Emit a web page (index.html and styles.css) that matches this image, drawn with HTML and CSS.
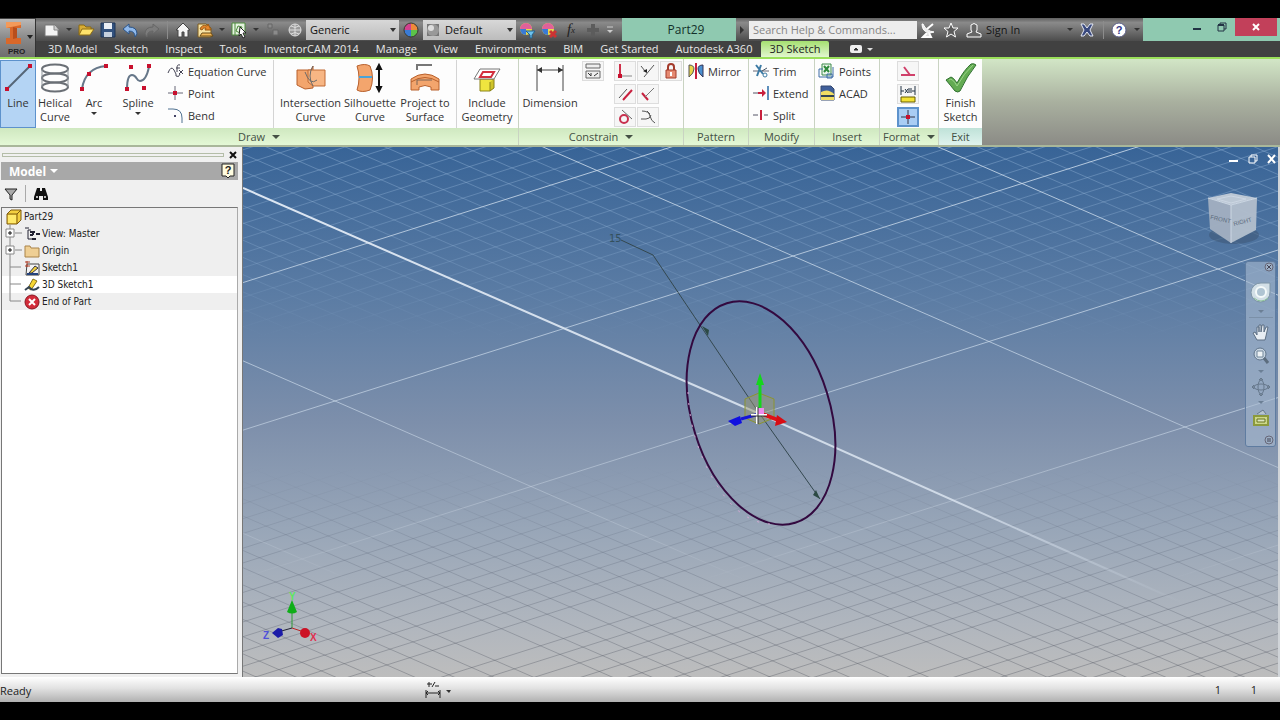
FILE: index.html
```html
<!DOCTYPE html>
<html lang="en">
<head>
<meta charset="utf-8">
<title>Part29</title>
<link rel="stylesheet" href="styles.css">
</head>
<body>
<div class="app">
<header class="top">
  <button class="app-button" aria-label="Application menu">
    <svg width="36" height="38" viewBox="0 0 36 38"><path d="M6 3h15v6h-4v10h4v6H6v-6h4V9H6z" fill="#d9682a"/><path d="M6 3h15v3l-15 3z" fill="#f39a5a"/><path d="M13 8l4 1v10l-4 1z" fill="#b94e1b"/><path d="M27 16h6l-3 4z" fill="#222"/><text x="8" y="35" class="pro">PRO</text></svg>
  </button>
  <div class="top-rows">
    <div class="titlebar">
      <div class="qat">
        <button class="slot" aria-label="New"><svg width="18" height="18"><path d="M2 4h10l3 4v7H2z" fill="#f4f4f4" stroke="#777"/><path d="M11 4v5h5" fill="#ccc" stroke="#888"/></svg></button>
        <button class="drop" aria-label="New options"></button>
        <button class="slot" aria-label="Open"><svg width="18" height="18"><path d="M2 14V4h5l2 2h5v3" fill="#d8ad35" stroke="#8b6b15"/><path d="M2 14l3-6h12l-4 6z" fill="#ffe36b" stroke="#8b6b15"/></svg></button>
        <button class="slot" aria-label="Save"><svg width="18" height="18"><path d="M2 2h14v14H2z" fill="#33527e" stroke="#1f3556"/><path d="M5 2h8v6H5z" fill="#e9eef5"/><path d="M5 11h8v5H5z" fill="#c5d0de"/></svg></button>
        <button class="slot" aria-label="Undo"><svg width="18" height="18"><path d="M2 8l6-5v3q8 0 8 7l-2 3q0-6-6-6v3z" fill="#8fb8ea" stroke="#2b5488"/></svg></button>
        <button class="slot" aria-label="Redo"><svg width="18" height="18"><path d="M16 8l-6-5v3q-8 0-8 7l2 3q0-6 6-6v3z" fill="#7c7c7c" stroke="#666"/></svg></button>
        <span class="sep"></span>
        <button class="slot" aria-label="Home"><svg width="18" height="18"><path d="M2 9l7-7 7 7h-2v7h-4v-5H8v5H4V9z" fill="#f5f5f5" stroke="#444"/></svg></button>
        <button class="slot" aria-label="Update"><svg width="18" height="18"><path d="M2 3h8l5 4v9H2z" fill="#f6e2a2" stroke="#7a5a20"/><path d="M4 8q2-5 7-3l1-2 3 6-6 0 1-2q-3-1-4 2z" fill="#e8862a" stroke="#9a5a15"/><path d="M6 12h9l2 3H4z" fill="#f2b95a" stroke="#6b4a15"/></svg></button>
        <button class="drop" aria-label="Update options"></button>
        <button class="slot" aria-label="Select"><svg width="18" height="18"><path d="M2 2h13v12H2z" fill="#e4f2df" stroke="#4d8a3c"/><path d="M5 2v12M8 5l4 1-2 6-4-2z" fill="none" stroke="#4d8a3c"/><path d="M10 6l6 6h-3l2 4-2 1-2-4-2 2z" fill="#fff" stroke="#222"/></svg></button>
        <button class="drop" aria-label="Select options"></button>
        <button class="slot" aria-label="Design doctor"><svg width="18" height="18"><path d="M4 3h4v4H4zM9 9h5v5H9z" fill="#8b8b8b" stroke="#666"/></svg></button>
        <button class="slot" aria-label="Material"><svg width="18" height="18"><circle cx="9" cy="9" r="6" fill="#999" stroke="#ddd"/><path d="M3 9h12M9 3v12M5 5q4 3 8 0M5 13q4-3 8 0" stroke="#ddd" fill="none"/></svg></button>
        <label class="combo"><select aria-label="Material"><option>Generic</option></select></label>
        <button class="slot ball" aria-label="Appearance"><svg width="18" height="18"><circle cx="9" cy="9" r="7" fill="#e9d94b"/><path d="M9 9L2 9a7 7 0 0 1 7-7z" fill="#d3408f"/><path d="M9 9V2a7 7 0 0 1 7 7z" fill="#ef8a3a"/><path d="M9 9H2a7 7 0 0 0 7 7z" fill="#3a7bd5"/><path d="M9 9v7a7 7 0 0 0 7-7z" fill="#5cc34a"/><circle cx="9" cy="9" r="7" fill="none" stroke="#333"/></svg></button>
        <label class="combo"><svg width="16" height="16"><path d="M2 2h12v12H2z" fill="#777"/><circle cx="8" cy="8" r="6" fill="#999"/><circle cx="6" cy="6" r="3" fill="#ddd"/></svg><select aria-label="Appearance"><option>Default</option></select></label>
        <button class="slot" aria-label="Adjust"><svg width="18" height="18"><circle cx="8" cy="8" r="6" fill="#e9d94b"/><path d="M8 8H2a6 6 0 0 1 12 0z" fill="#e0609a"/><path d="M8 8H2a6 6 0 0 0 6 6z" fill="#3a7bd5"/><path d="M8 10h9l-3 4v3h-2v-3z" fill="#6fc3ee" stroke="#23618a"/></svg></button>
        <button class="slot" aria-label="Clear"><svg width="18" height="18"><circle cx="8" cy="8" r="6" fill="#e9d94b"/><path d="M8 8H2a6 6 0 0 1 12 0z" fill="#e0609a"/><path d="M8 8H2a6 6 0 0 0 6 6z" fill="#3a7bd5"/><path d="M10 10l6 6m0-6l-6 6" stroke="#c33" stroke-width="3"/></svg></button>
        <button class="slot fx" aria-label="Parameters">f<sub>x</sub></button>
        <button class="slot" aria-label="Add"><svg width="18" height="18"><path d="M9 3v12M3 9h12" stroke="#5c5c5c" stroke-width="4"/></svg></button>
        <button class="drop" aria-label="Customize"><svg width="8" height="8"><path d="M1 1h6" stroke="#ccc"/><path d="M1 4h6L4 7z" fill="#ccc"/></svg></button>
      </div>
      <h1 class="doc-title">Part29</h1>
      <div class="info">
        <button class="drop side" aria-label="Expand"></button>
        <input class="search" type="text" placeholder="Search Help &amp; Commands..." aria-label="Search Help">
        <button class="slot" aria-label="Communication"><svg width="18" height="18"><path d="M3 3q0 8 8 9l4-1q-8-1-11-8z" fill="#eee" stroke="#fff"/><path d="M8 8l6-5M8 12l-4 4h8l-2-4" fill="#ddd" stroke="#fff" stroke-width="2"/></svg></button>
        <button class="slot" aria-label="Favorites"><svg width="18" height="18"><path d="M9 2l2 5h5l-4 3.500 1.500 5.500L9 13l-4.500 3L6 10.500 2 7h5z" fill="#5b5b5b" stroke="#fff"/></svg></button>
        <button class="slot" aria-label="Account"><svg width="18" height="18"><path d="M6 4q3-3 6 0v5l-1 2 5 2v3H2v-3l5-2-1-2z" fill="#666" stroke="#fff"/></svg></button>
        <button class="signin">Sign In</button>
        <button class="drop" aria-label="Account options"></button>
        <button class="slot" aria-label="Exchange"><svg width="18" height="18"><path d="M3 3h3l3 4 3-4h3l-3 6 3 6h-3l-3-4-3 4H3l3-6z" fill="#39497e" stroke="#e4e8f4"/></svg></button>
        <span class="sep"></span>
        <button class="slot" aria-label="Help"><svg width="18" height="18"><circle cx="9" cy="9" r="7" fill="#fff" stroke="#5a5d86"/><text x="9" y="13" class="qmark">?</text></svg></button>
        <button class="drop" aria-label="Help options"></button>
      </div>
      <div class="win">
        <button aria-label="Minimize"><svg width="12" height="12"><path d="M2 8h8" stroke="#234" stroke-width="2"/></svg></button>
        <button aria-label="Restore"><svg width="12" height="12"><path d="M2 4h6v6H2zM4 4V2h6v6H8" fill="none" stroke="#234"/><path d="M2 4h6" stroke="#234" stroke-width="2"/></svg></button>
        <button class="close" aria-label="Close"><svg width="12" height="12"><path d="M3 3l6 6M9 3l-6 6" stroke="#fff" stroke-width="2"/></svg></button>
      </div>
    </div>
    <nav class="tabs">
      <button>3D Model</button><button>Sketch</button><button>Inspect</button><button>Tools</button><button>InventorCAM 2014</button><button>Manage</button><button>View</button><button>Environments</button><button>BIM</button><button>Get Started</button><button>Autodesk A360</button><button class="active">3D Sketch</button>
      <button class="mini" aria-label="Ribbon display"><svg width="26" height="8"><rect x="0" y="0" width="12" height="8" rx="2" fill="#eee"/><path d="M4 5l2-2 2 2z" fill="#333" stroke="#333"/><path d="M17 3h6l-3 3z" fill="#ddd"/></svg></button>
    </nav>
  </div>
</header>

<section class="ribbon">
  <div class="panel draw">
    <div class="body">
      <button class="big on w36"><svg width="32" height="32"><path d="M5 27L28 4" stroke="#567" stroke-width="2"/><path d="M3 25h4v4H3zM26 2h4v4h-4z" fill="#c8102e"/></svg><span>Line</span></button>
      <button class="big w38"><svg width="32" height="32"><g fill="none" stroke="#6a6f75" stroke-width="2"><ellipse cx="16" cy="7" rx="13" ry="4.500"/><ellipse cx="16" cy="16" rx="13" ry="4.500"/><ellipse cx="16" cy="25" rx="13" ry="4.500"/></g><path d="M3 7v18M29 7v18" stroke="#8d949a" fill="none"/></svg><span>Helical Curve</span></button>
      <button class="big w40"><svg width="32" height="32"><path d="M4 27Q7 6 28 4" fill="none" stroke="#667789" stroke-width="2"/><path d="M2 25h4v4H2zM9 10h4v4H9zM26 2h4v4h-4z" fill="#c8102e"/></svg><span>Arc</span><i class="caret"></i></button>
      <button class="big w48"><svg width="32" height="32"><path d="M5 27Q5 13 10 13C15 13 14 19 18 19Q24 19 27 5" fill="none" stroke="#667789" stroke-width="2"/><path d="M3 25h4v4H3zM7 3h4v4H7zM25 2h4v4h-4zM20 24h4v4h-4z" fill="#c8102e"/></svg><span>Spline</span><i class="caret"></i></button>
      <div class="list pad">
        <button><svg width="18" height="18"><path d="M1 11q3-8 6-3t2 6q3 2 4-2" fill="none" stroke="#445" /><path d="M13 3q-3-1-3 3v4M9 6h4M12 8l4 4m0-4l-4 4" fill="none" stroke="#445"/></svg>Equation Curve</button>
        <button><svg width="18" height="18"><path d="M8 2v14M1 9h15" stroke="#667"/><path d="M6 7h4v4H6z" fill="#c8102e"/></svg>Point</button>
        <button><svg width="18" height="18"><path d="M1 3h5q9 0 9 9v5" fill="none" stroke="#4f7190" stroke-width="1"/><path d="M7 9h2v2H7z" fill="#446"/></svg>Bend</button>
      </div>
      <div class="group">
        <button class="big w61"><svg width="32" height="32"><path d="M2 8h14l2-4v22l-8 1-8-4z" fill="#f3a56d" stroke="#b8602c"/><path d="M13 8h17v16H18l-5-4z" fill="#f7b684" stroke="#c06a35"/><path d="M10 10q5 14 12 8M18 4q-6 10 0 20" fill="none" stroke="#6b6b6b"/></svg><span>Intersection Curve</span></button>
        <button class="big w58"><svg width="32" height="32"><path d="M3 4q8-3 13 0 5 12 0 24-8 3-13 0 4-12 0-24z" fill="#f3a56d" stroke="#b8602c"/><path d="M5 15h13" stroke="#4aa3d8" stroke-width="2"/><path d="M25 4v24M23 7l2-4 2 4zM23 25l2 4 2-4z" stroke="#111" stroke-width="2" fill="#111"/></svg><span>Silhouette Curve</span></button>
        <button class="big w52"><svg width="32" height="32"><path d="M8 8V3h15" fill="none" stroke="#777" stroke-width="2"/><path d="M2 17q14-10 28 0v11H22v-3q-6-3-12 0v3H2z" fill="#f3a56d" stroke="#b8602c"/><path d="M2 20q14-9 28 0" fill="none" stroke="#b8602c"/><path d="M8 23v-5h15" fill="none" stroke="#7a6456"/></svg><span>Project to Surface</span></button>
      </div>
      <div class="group last">
        <button class="big w60"><svg width="32" height="32"><path d="M9 17h13v9l-3 3H9z" fill="#efe53f" stroke="#8a831a"/><path d="M19 20v9l4-3v-9" fill="#cfc42a" stroke="#8a831a"/><path d="M9 7h20l-6 10H3z" fill="#fff" stroke="#777"/><path d="M12 10h11l-3 5H9z" fill="#fff" stroke="#d2303e" stroke-width="2"/></svg><span>Include Geometry</span></button>
      </div>
    </div>
    <footer>Draw<i class="caret"></i></footer>
  </div>
  <div class="panel constrain">
    <div class="body">
      <button class="big w62"><svg width="32" height="32"><path d="M3 3v26M29 3v26M3 8h26" stroke="#444" stroke-width="1"/><path d="M3 8l5-3v6zM29 8l-5-3v6z" fill="#333"/></svg><span>Dimension</span></button>
      <div class="tools one"><button aria-label="Automatic dimensions"><svg width="18" height="18"><path d="M2 2h14v4H2zM2 9h14v7H2z" fill="#eee" stroke="#666"/><path d="M4 11l3 3m0-3v3M10 14l4-3" stroke="#333" fill="none"/></svg></button></div>
      <div class="tools">
        <button aria-label="Coincident"><svg width="18" height="18"><path d="M4 2v13" stroke="#d0304a" stroke-width="2"/><path d="M4 14h12" stroke="#888"/><path d="M2 12h4v4H2z" fill="#c8102e"/></svg></button>
        <button aria-label="Collinear"><svg width="18" height="18"><path d="M2 4l4 5M5 15L15 3" stroke="#555"/><path d="M4 9l4 2V7z" fill="#222"/></svg></button>
        <button aria-label="Fix"><svg width="18" height="18"><path d="M4 8h10v8H4z" fill="#e58a72" stroke="#a33a2a"/><path d="M6 8V5q0-3 3-3t3 3v3" fill="none" stroke="#a33a2a" stroke-width="2"/><path d="M8 10h2v4H8z" fill="#fff"/></svg></button>
        <button aria-label="Parallel"><svg width="18" height="18"><path d="M3 13l8-9" stroke="#555"/><path d="M7 15l9-10" stroke="#c8203e" stroke-width="2"/></svg></button>
        <button aria-label="Perpendicular"><svg width="18" height="18"><path d="M3 8l6 7" stroke="#c8203e" stroke-width="2"/><path d="M6 12l9-9" stroke="#777"/></svg></button>
        <span></span>
        <button aria-label="Tangent"><svg width="18" height="18"><circle cx="8" cy="11" r="4" fill="none" stroke="#c8304e" stroke-width="2"/><path d="M6 2l10 9" stroke="#666"/></svg></button>
        <button aria-label="Smooth"><svg width="18" height="18"><path d="M3 3q7 0 8 5t5 7M2 11h5q4 0 5-4M8 3l3 3" fill="none" stroke="#555"/></svg></button>
      </div>
    </div>
    <footer>Constrain<i class="caret"></i></footer>
  </div>
  <div class="panel pattern">
    <div class="body"><div class="list"><button><svg width="18" height="18"><path d="M2 3q5 0 5 4t-5 8z" fill="#e8d54a" stroke="#555"/><path d="M16 3q-5 0-5 4t5 8z" fill="#4a8fd0" stroke="#335"/><path d="M9 1v16" stroke="#c8203e" stroke-width="2"/></svg>Mirror</button></div></div>
    <footer>Pattern</footer>
  </div>
  <div class="panel modify">
    <div class="body"><div class="list">
      <button><svg width="18" height="18"><path d="M1 9h16" stroke="#667"/><path d="M4 3l7 9M9 3l-4 11" stroke="#3d7ba5" stroke-width="2"/><circle cx="13" cy="13" r="2" fill="none" stroke="#3d7ba5"/><path d="M10 9l5-3" stroke="#456"/></svg>Trim</button>
      <button><svg width="18" height="18"><path d="M1 9h6" stroke="#556"/><path d="M6 9h6" stroke="#c8203e" stroke-width="2"/><path d="M10 5l4 4-4 4z" fill="#c8203e"/><path d="M16 2v14" stroke="#5d8fbc" stroke-width="2"/></svg>Extend</button>
      <button><svg width="18" height="18"><path d="M1 9h5M12 9h4" stroke="#556"/><path d="M9 4v10" stroke="#c8203e" stroke-width="2"/></svg>Split</button>
    </div></div>
    <footer>Modify</footer>
  </div>
  <div class="panel insert">
    <div class="body"><div class="list">
      <button><svg width="18" height="18"><path d="M4 2h9v11H4z" fill="#eef6ee" stroke="#3d8a4a"/><path d="M6 4l5 6m0-6l-5 6" stroke="#2f8a3c" stroke-width="2"/><path d="M1 7h4M1 7v8h14V5M9 12h5v4H9z" fill="none" stroke="#3c6da5"/></svg>Points</button>
      <button><svg width="18" height="18"><path d="M3 2h10l3 3v11H3z" fill="#3f5f9a" stroke="#34486f"/><path d="M3 8q7-4 13 2v6H3z" fill="#f1dd63"/><path d="M3 11h13v2H3z" fill="#345"/></svg>ACAD</button>
    </div></div>
    <footer>Insert</footer>
  </div>
  <div class="panel format">
    <div class="body"><div class="tools one">
      <button aria-label="Construction"><svg width="18" height="18"><path d="M2 13h14M5 5l6 8" stroke="#d0406a" stroke-width="2"/></svg></button>
      <button aria-label="Driven dimension"><svg width="18" height="18"><path d="M2 1v9M16 1v9M2 6h3M13 6h3M6 4l3 4m0-4L6 8M10 3v5M12 3v5" stroke="#234"/><path d="M2 12h14v5H2z" fill="#f3e234" stroke="#665d00"/></svg></button>
      <button class="on" aria-label="Center point"><svg width="18" height="18"><path d="M9 2v14M2 9h14" stroke="#334"/><path d="M7 7h4v4H7z" fill="#c8102e"/></svg></button>
    </div></div>
    <footer>Format<i class="caret"></i></footer>
  </div>
  <div class="panel exit">
    <div class="body"><button class="big w43"><svg width="32" height="32"><path d="M1 18l5-3q2 0 6 6Q19 8 26 2q3-1 5 1Q22 14 15 29q-2 2-5 0Q6 24 1 18z" fill="#63ab52" stroke="#2f7030"/><path d="M4 18q3-3 8 6Q19 11 28 3" fill="none" stroke="#9bd48a" stroke-width="1"/></svg><span>Finish Sketch</span></button></div>
    <footer>Exit</footer>
  </div>
</section>

<main class="work">
  <aside class="browser">
    <div class="grip"><span></span><button aria-label="Close panel"><svg width="8" height="8"><path d="M1 1l6 6M7 1L1 7" stroke="#111" stroke-width="2"/></svg></button></div>
    <div class="browser-head"><button class="model">Model<i class="caret"></i></button><button aria-label="Panel help"><svg width="14" height="16"><path d="M1 1h12v12H9l-2 2-2-2H1z" fill="#fffce0" stroke="#222"/><text x="7" y="11" class="qmark dark">?</text></svg></button></div>
    <div class="browser-tools">
      <button aria-label="Filter"><svg width="16" height="16"><path d="M2 3h12l-5 6v5l-2-1V9z" fill="#aaa" stroke="#222"/></svg></button>
      <span></span>
      <button aria-label="Find"><svg width="18" height="16"><path d="M5 2h3v3h2V2h3l3 9v3h-5v-4H7v4H2v-3z" fill="#111"/><path d="M4 10h2v2H4zM12 10h2v2h-2z" fill="#bbb"/></svg></button>
    </div>
    <ul class="tree">
      <li class="root"><svg width="16" height="16"><path d="M1 5l4-4h10v10l-4 4H1z" fill="#f4cf3f" stroke="#7d5a10"/><path d="M2 6h8v8H2z" fill="#ffe96a"/><path d="M1 5h10v10M11 5l4-4" fill="none" stroke="#7d5a10"/></svg>Part29</li>
      <li><svg width="21" height="17"><path d="M7 0v17M12 8h7" stroke="#888"/><path d="M3 4h8v8H3z" fill="#fff" stroke="#888"/><path d="M5 8h4M7 6v4" stroke="#111"/></svg><svg width="16" height="16"><path d="M1 2h4M4 4v9M4 4h3M4 13h4" stroke="#223" fill="none"/><path d="M6 6h5M9 6v3M6 9h3M8 13h4M12 8h4" stroke="#223" stroke-width="2" fill="none"/></svg>View: Master</li>
      <li><svg width="21" height="17"><path d="M7 0v17M12 8h7" stroke="#888"/><path d="M3 4h8v8H3z" fill="#fff" stroke="#888"/><path d="M5 8h4M7 6v4" stroke="#111"/></svg><svg width="16" height="16"><path d="M1 14V3h5l1 2h8v9z" fill="#efcf94" stroke="#a98349"/></svg>Origin</li>
      <li><svg width="21" height="17"><path d="M7 0v17M7 8h11" stroke="#888" fill="none"/></svg><svg width="16" height="16"><path d="M3 4h12v11H2z" fill="#f3f3f3" stroke="#444"/><path d="M1 2h5M3 1v6M1 6h5" stroke="#b0402a"/><path d="M5 13l6-7 3 2-6 5z" fill="#f1cf3c" stroke="#334"/><path d="M3 14h11" stroke="#24427c" stroke-width="2"/></svg>Sketch1</li>
      <li class="current"><svg width="21" height="17"><path d="M7 0v17M7 8h11" stroke="#888" fill="none"/></svg><svg width="16" height="16"><path d="M4 11L9 2l4 2-6 9z" fill="#f6d634" stroke="#86701a"/><path d="M1 13l4-3 2 2q4 2 8-2" fill="none" stroke="#345" stroke-width="2"/></svg>3D Sketch1</li>
      <li><svg width="21" height="17"><path d="M7 0v8h11" stroke="#888" fill="none"/></svg><svg width="16" height="16"><circle cx="8" cy="8" r="7" fill="#d22c3a" stroke="#8b1420"/><path d="M5 5l6 6M11 5l-6 6" stroke="#fff" stroke-width="2"/></svg>End of Part</li>
    </ul>
  </aside>
  <section class="viewport">
    <svg class="scene" viewBox="0 -1 1035 530" preserveAspectRatio="xMinYMin slice">
      <defs>
        <linearGradient id="minor" gradientUnits="userSpaceOnUse" x1="0" y1="0" x2="0" y2="529">
          <stop offset="0" stop-color="#98b8da" stop-opacity=".42"/><stop offset=".2" stop-color="#98b8da" stop-opacity=".27"/><stop offset=".36" stop-color="#98b8da" stop-opacity="0"/>
          <stop offset=".6" stop-color="#566074" stop-opacity="0"/><stop offset=".75" stop-color="#566074" stop-opacity=".24"/><stop offset="1" stop-color="#565a64" stop-opacity=".4"/>
        </linearGradient>
        <linearGradient id="major" gradientUnits="userSpaceOnUse" x1="0" y1="0" x2="0" y2="529">
          <stop offset="0" stop-color="#d4e2f0" stop-opacity=".8"/><stop offset=".5" stop-color="#d4e2f0" stop-opacity=".6"/><stop offset=".76" stop-color="#d4dce6" stop-opacity=".2"/><stop offset=".82" stop-color="#d4dce6" stop-opacity="0"/>
        </linearGradient>
        <linearGradient id="axis" gradientUnits="userSpaceOnUse" x1="0" y1="40" x2="940" y2="455">
          <stop offset="0" stop-color="#dce6f2"/><stop offset=".75" stop-color="#d6e0ec" stop-opacity=".9"/><stop offset="1" stop-color="#d6e0ec" stop-opacity="0"/>
        </linearGradient>
      </defs>
      <g id="grid-minor" stroke="url(#minor)"></g>
      <g id="grid-major" stroke="url(#major)"></g>
      <path d="M0 40L517 266L940 455" fill="none" stroke="url(#axis)" stroke-width="2"/>
      <path d="M378 92l32 15 104 155 63 89" fill="none" stroke="#34484f"/>
      <path d="M459 178l7 4-1 6zM577 351l-7-4 3-5z" fill="#2c4a44"/>
      <text x="366" y="94" class="dim">15</text>
      <ellipse cx="518" cy="265" rx="115" ry="69" transform="rotate(72.700 518 265)" fill="none" stroke="#33093f" stroke-width="2"/>
      <path d="M445 244q2 50 28 92t60 40" fill="none" stroke="#d9a7d4" stroke-dasharray="2 9"/>
      <path d="M502 251l14-6 15 6v19l-15 6-14-6z" fill="#9b9a6a" fill-opacity=".45" stroke="#8b9430"/>
      <path d="M517 264v-28" stroke="#14d61c" stroke-width="3"/><path d="M517 225l4 12h-8z" fill="#14d61c"/>
      <path d="M517 265l18 7" stroke="#e01018" stroke-width="4"/><path d="M534 267l10 7-12 4z" fill="#d80c14"/>
      <path d="M516 266l-18 5" stroke="#1414d8" stroke-width="3"/><path d="M485 273l12-5 2 7-7 3z" fill="#1010e0"/>
      <path d="M514 260h7v7h-7z" fill="#ee8aee"/><path d="M514 259v17M508 267h16" stroke="#fff" stroke-width="2"/><path d="M515 259v17M508 268h16" stroke="#333"/>
      <path d="M49 480v-18" stroke="#2c9a34"/><path d="M49 452l5 12q-5 3-10 0z" fill="#0fae18"/>
      <path d="M49 480l-14 4" stroke="#223"/><path d="M49 480l12 4" stroke="#b22"/>
      <path d="M29 485l6-5 4 1 1 6-5 3z" fill="#1b1ba8"/><circle cx="62" cy="485" r="5" fill="#cc1226"/>
      <text x="46" y="452" class="axis ay">Y</text><text x="20" y="491" class="axis az">Z</text><text x="67" y="493" class="axis ax">X</text>
    </svg>
    <div class="doc-win">
      <button aria-label="Minimize document"><svg width="12" height="12"><path d="M1 8h9" stroke="#fff" stroke-width="2"/></svg></button>
      <button aria-label="Restore document"><svg width="12" height="12"><path d="M2 4h6v6H2zM4 4V2h6v6H8" fill="none" stroke="#fff" stroke-width="1"/></svg></button>
      <button aria-label="Close document"><svg width="12" height="12"><path d="M2 2l7 8M9 2l-7 8" stroke="#fff" stroke-width="2"/></svg></button>
    </div>
    <svg class="cube" width="56" height="60" viewBox="0 0 56 60">
      <ellipse cx="29" cy="45" rx="25" ry="9" fill="#3c5470" opacity=".5"/>
      <path d="M3 8L26 3l26 5-26 7z" fill="#c3cdd9"/><path d="M3 8l23 7v38L5 39z" fill="#a3b0c1"/><path d="M26 15l26-7-1 32-25 13z" fill="#b3bfcd"/>
      <path d="M3 8l23 7 26-7M26 15v38M12 9l14-3 15 3-15 4z" fill="none" stroke="#d4dde7"/>
      <text x="5" y="29" transform="rotate(12 5 29)" class="face">FRONT</text><text x="29" y="36" transform="rotate(-14 29 36)" class="face">RIGHT</text>
    </svg>
    <div class="navbar">
      <button class="tiny" aria-label="Close navigation bar"><svg width="10" height="10"><circle cx="5" cy="5" r="4" fill="#9db0c6" stroke="#667"/><path d="M3 3l4 4M7 3L3 7" stroke="#445"/></svg></button>
      <button class="wheel" aria-label="Steering wheel"><svg width="24" height="26"><path d="M12 3h9v9a9.500 9.500 0 1 1-9-9z" fill="#d2dfe6" stroke="#7d94a6"/><circle cx="12" cy="12" r="5" fill="#afc4d2" stroke="#f4fafa" stroke-width="2"/><path d="M5 18q7 6 14 0" fill="none" stroke="#8cc29a"/></svg></button>
      <i></i><hr>
      <button aria-label="Pan"><svg width="18" height="20"><path d="M5 18l-4-7 2-1 2 3V5h2v5V3h2v7l1-7h2v7l2-5h2l-2 9-1 4z" fill="#e7edf3" stroke="#5d6f83"/></svg></button>
      <button aria-label="Zoom"><svg width="18" height="20"><circle cx="8" cy="8" r="6" fill="#c9d6e2" stroke="#60748a"/><path d="M5 5h6v6H5z" fill="#eef3f6" stroke="#71869a"/><path d="M12 12l4 5" stroke="#5c6d7e" stroke-width="3"/></svg></button>
      <i></i>
      <button aria-label="Orbit"><svg width="18" height="20"><ellipse cx="9" cy="10" rx="7" ry="3" fill="none" stroke="#66788c"/><ellipse cx="9" cy="10" rx="3" ry="7" fill="none" stroke="#66788c"/><path d="M7 3l2-2 2 2zM7 17l2 2 2-2zM2 8L0 10l2 2zM16 8l2 2-2 2z" fill="#8597a9" stroke="#66788c"/></svg></button>
      <i></i>
      <button aria-label="Look at"><svg width="18" height="20"><path d="M5 6l6-4 3 4" fill="#b8c5d0" stroke="#66788c"/><path d="M2 8h14v9H2z" fill="#ccd78a" stroke="#8c9a3c" stroke-width="2"/><path d="M5 11h8v3H5z" fill="#dde6c0" stroke="#68751f"/></svg></button>
      <button class="tiny end" aria-label="Navigation bar options"><svg width="10" height="10"><circle cx="5" cy="5" r="4" fill="#9db0c6" stroke="#667"/><path d="M3 4h4M3 6h4" stroke="#445"/></svg></button>
    </div>
  </section>
</main>
<footer class="status">
  <span class="ready">Ready</span>
  <button class="tol" aria-label="Tolerance"><svg width="28" height="18"><path d="M2 3h5M4 1v5M7 6l3-5M10 5h4M1 9v8M15 9v8M1 12h14" stroke="#222"/><path d="M3 10l-2 2 2 2M13 10l2 2-2 2" stroke="#222" fill="none"/><path d="M21 9h5l-2 3z" fill="#333"/></svg></button>
  <span class="count">1</span><span class="count">1</span>
</footer>
</div>
<script src="grid.js"></script>
</body>
</html>
```
FILE: styles.css
```css
* { box-sizing: border-box; }
body { margin: 0; background: #000; font-family: "Open Sans", "Noto Sans", sans-serif; font-size: 11px; color: #333; }
button { margin: 0; padding: 0; border: 0; background: none; font: inherit; color: inherit; }
svg { display: block; flex: none; }
.app { display: flex; flex-direction: column; min-height: 100vh; padding: 18px 0; }

.top { display: flex; background: #414141; border-bottom: 2px solid #9be05a; }
.app-button { width: 36px; margin-top: 1px; background: linear-gradient(#b8b8b8, #8a8a8a 50%, #6e6e6e); border-right: 1px solid #333; }
.pro { font: bold 8px "Liberation Sans", sans-serif; fill: #222; }
.top-rows { flex: 1; min-width: 0; }
.titlebar { display: flex; height: 23px; background: linear-gradient(#606060, #8a8a8a 20%, #707070 55%, #4c4c4c); }
.qat, .info { display: flex; align-items: center; }
.qat { padding: 0 6px 0 5px; }
.slot { display: flex; width: 22px; height: 22px; align-items: center; justify-content: center; flex: none; }
.ball { margin: 0 1px; }
.fx { font: italic 15px "Liberation Serif", serif; color: #222; }
.fx sub { font-size: 9px; }
.drop { display: flex; width: 12px; height: 22px; align-items: center; justify-content: center; flex: none; }
.drop:empty::after { content: ""; border: 3px solid transparent; border-top-color: #333; border-bottom: 0; }
.side:empty::after { border: 4px solid transparent; border-left-color: #333; border-right: 0; }
.sep { width: 1px; height: 18px; margin: 0 4px; background: #8c8c8c; }
.combo { display: flex; align-items: center; width: 93px; height: 20px; background: linear-gradient(#d8d8d8, #bcbcbc); color: #111; }
.combo svg { margin-left: 2px; }
.combo select { flex: 1; min-width: 0; height: 20px; padding: 0 4px; border: 0; background: none; appearance: none; font: inherit; color: inherit; }
.combo::after { content: ""; margin-right: 3px; border: 3px solid transparent; border-top: 4px solid #333; border-bottom: 0; }
.doc-title { flex: 1; margin: 0; background: #8fc9b0; font-size: 12px; font-weight: 400; line-height: 23px; text-align: center; color: #12302a; padding-left: 14px; }
.search { width: 168px; height: 18px; margin-left: 1px; padding: 0 4px; border: 0; background: #ededed; font: inherit; }
.search::placeholder { color: #858585; opacity: 1; }
.info .slot { margin-right: 1px; }
.signin { width: 78px; text-align: left; color: #151515; }
.qmark { font: bold 11px "Liberation Sans", sans-serif; fill: #34388a; text-anchor: middle; }
.dark { fill: #222; }
.win { display: flex; width: 137px; justify-content: flex-end; align-items: flex-start; padding-right: 3px; background: #8fc9b0; }
.win button { display: flex; width: 25px; height: 18px; align-items: center; justify-content: center; }
.win .close { width: 42px; margin-left: 1px; background: #c2405a; }
.tabs { display: flex; height: 16px; padding-left: 4px; color: #e8e8e8; }
.tabs button { padding: 0 9px 0 8px; line-height: 16px; white-space: nowrap; }
.tabs .active { padding: 0 8px; background: linear-gradient(#a5e070, #e2f6d0); color: #222; border-radius: 2px 2px 0 0; }
.tabs .mini { padding: 0 21px; }

.ribbon { display: flex; height: 88px; border-bottom: 2px solid #a9b79a; background: linear-gradient(#d2e6c6, #a9b09f 50%, #8b8b86); }
.panel { display: flex; flex-direction: column; flex: none; border-right: 1px solid #c9d3c2; }
.panel .body { display: flex; flex: 1; background: #fdfdfd; padding-top: 1px; }
.panel footer { display: flex; height: 17px; align-items: center; justify-content: center; gap: 7px; background: linear-gradient(#cfe8c0, #e4f8d6); color: #445044; }
.caret { border: 4px solid transparent; border-top: 4px solid currentColor; border-bottom: 0; }
.draw { width: 519px; }
.constrain { width: 165px; }
.pattern { width: 65px; }
.modify { width: 66px; }
.insert { width: 65px; }
.format { width: 59px; }
.exit { width: 43px; border: 0; }
.exit footer { background: linear-gradient(#bfe2d8, #dff3ee); }
.big { display: flex; flex-direction: column; align-items: center; padding-top: 2px; line-height: 14px; }
.big svg { margin-bottom: 2px; }
.big .caret { margin-top: 2px; border-width: 3px 3px 0; }
.on { background: #b4d4f4; box-shadow: inset 0 0 0 1px #5d92cc; }
.w36 { width: 36px; } .w38 { width: 38px; } .w40 { width: 40px; } .w43 { width: 43px; } .w48 { width: 48px; }
.w52 { width: 52px; } .w58 { width: 58px; } .w60 { width: 60px; } .w61 { width: 61px; } .w62 { width: 62px; }
.list { display: flex; flex-direction: column; padding-left: 3px; }
.list.pad { width: 111px; padding-left: 5px; }
.list button { display: flex; height: 22px; align-items: center; gap: 3px; white-space: nowrap; }
.group { display: flex; padding: 0 5px 0 6px; border-left: 1px solid #d4d4d4; }
.group.last { padding: 0; }
.tools { display: grid; grid-template-columns: repeat(3, 22px); grid-auto-rows: 20px; gap: 3px 1px; align-content: start; margin: 1px 0 0 10px; }
.tools.one { grid-template-columns: 22px; margin-left: 1px; }
.format .tools.one { margin-left: 17px; }
.tools button { display: flex; align-items: center; justify-content: center; border: 1px solid #ddd; background: #f6f6f6; }
.tools button.on { border-color: #5d92cc; background: #a9cdf4; }

.work { display: flex; flex: 1; min-height: 0; }
.browser { display: flex; flex-direction: column; width: 243px; flex: none; padding: 0 4px 3px 1px; background: #f0f0f0; border-right: 1px solid #777; color: #222; }
.grip { display: flex; height: 15px; align-items: center; gap: 5px; padding: 0 1px; }
.grip span { flex: 1; height: 4px; border: 1px solid #b4bda8; }
.browser-head { display: flex; height: 18px; align-items: center; justify-content: space-between; padding: 0 3px 0 8px; background: #a8a8a8; }
.model { display: flex; align-items: center; gap: 4px; font-weight: 700; font-size: 12px; color: #fff; }
.browser-tools { display: flex; height: 27px; align-items: center; gap: 6px; padding-left: 2px; }
.browser-tools span { width: 1px; height: 17px; background: #aaa; }
.tree { flex: 1; margin: 0; padding: 0; list-style: none; background: #fff; border: 1px solid #777; border-right-color: #aaa; }
.tree li { display: flex; height: 17px; align-items: center; padding-left: 1px; background: #efefef; font: 10px "DejaVu Sans Condensed", "DejaVu Sans", sans-serif; white-space: nowrap; }
.tree li svg + svg { margin-right: 2px; }
.tree .root { gap: 2px; padding-left: 4px; }
.tree .current { background: #fff; }

.viewport { position: relative; flex: 1; min-width: 0; overflow: hidden; border-right: 2px solid #d0d4d8; background: linear-gradient(#386497, #5b7ca4 28%, #7d8fab 52%, #98a6b8 72%, #b0b6be 90%, #bdbdbd); }
.scene { position: absolute; inset: 0; width: 100%; height: 100%; }
.dim { font: 11px "DejaVu Sans Condensed", sans-serif; fill: #34505c; }
.axis { font: bold 10px "Liberation Sans", sans-serif; }
.ay { fill: #5ce85c; } .az { fill: #5050d8; } .ax { fill: #e03050; }
.doc-win { position: absolute; top: 6px; right: 0; display: flex; gap: 7px; }
.cube { position: absolute; top: 43px; right: 17px; opacity: .95; }
.face { font: 6px "Liberation Sans", sans-serif; fill: #5c6a7a; }
.navbar { position: absolute; top: 114px; right: 2px; display: flex; flex-direction: column; align-items: center; gap: 4px; width: 31px; height: 186px; border: 1px solid #5f7ca0; border-radius: 3px; background: rgba(168, 186, 208, .6); }
.navbar .tiny { align-self: flex-end; margin-right: 1px; }
.navbar .wheel { margin-top: 4px; }
.navbar .end { margin-top: auto; margin-bottom: 1px; }
.navbar i { border: 3px solid transparent; border-top-color: #6b7f95; border-bottom: 0; }
.navbar hr { width: 24px; height: 1px; margin: 0; border: 0; background: #7b90a8; }

.status { display: flex; height: 25px; align-items: center; background: linear-gradient(#fff, #e2e2e2 45%, #b0b0b0); color: #222; padding-right: 8px; }
.ready { width: 425px; padding-top: 2px; }
.tol { margin-right: auto; }
.count { width: 36px; text-align: center; }
```
FILE: grid.js
```js
const origin = [517, 266];
const stepA = [196, 85.5];
const stepB = [229, -72.5];
const divisions = 10;
const reach = 8;

function addLine(parent, along, across, offset) {
  const line = document.createElementNS("http://www.w3.org/2000/svg", "path");
  const cx = origin[0] + across[0] * offset;
  const cy = origin[1] + across[1] * offset;
  line.setAttribute("d",
    `M${cx - along[0] * reach} ${cy - along[1] * reach}L${cx + along[0] * reach} ${cy + along[1] * reach}`);
  parent.append(line);
}

const minor = document.getElementById("grid-minor");
const major = document.getElementById("grid-major");
for (let i = -60; i <= 60; i++) {
  const group = i % divisions === 0 ? major : minor;
  if (i !== 0) addLine(group, stepA, stepB, i / divisions);
  addLine(group, stepB, stepA, i / divisions);
}
```
